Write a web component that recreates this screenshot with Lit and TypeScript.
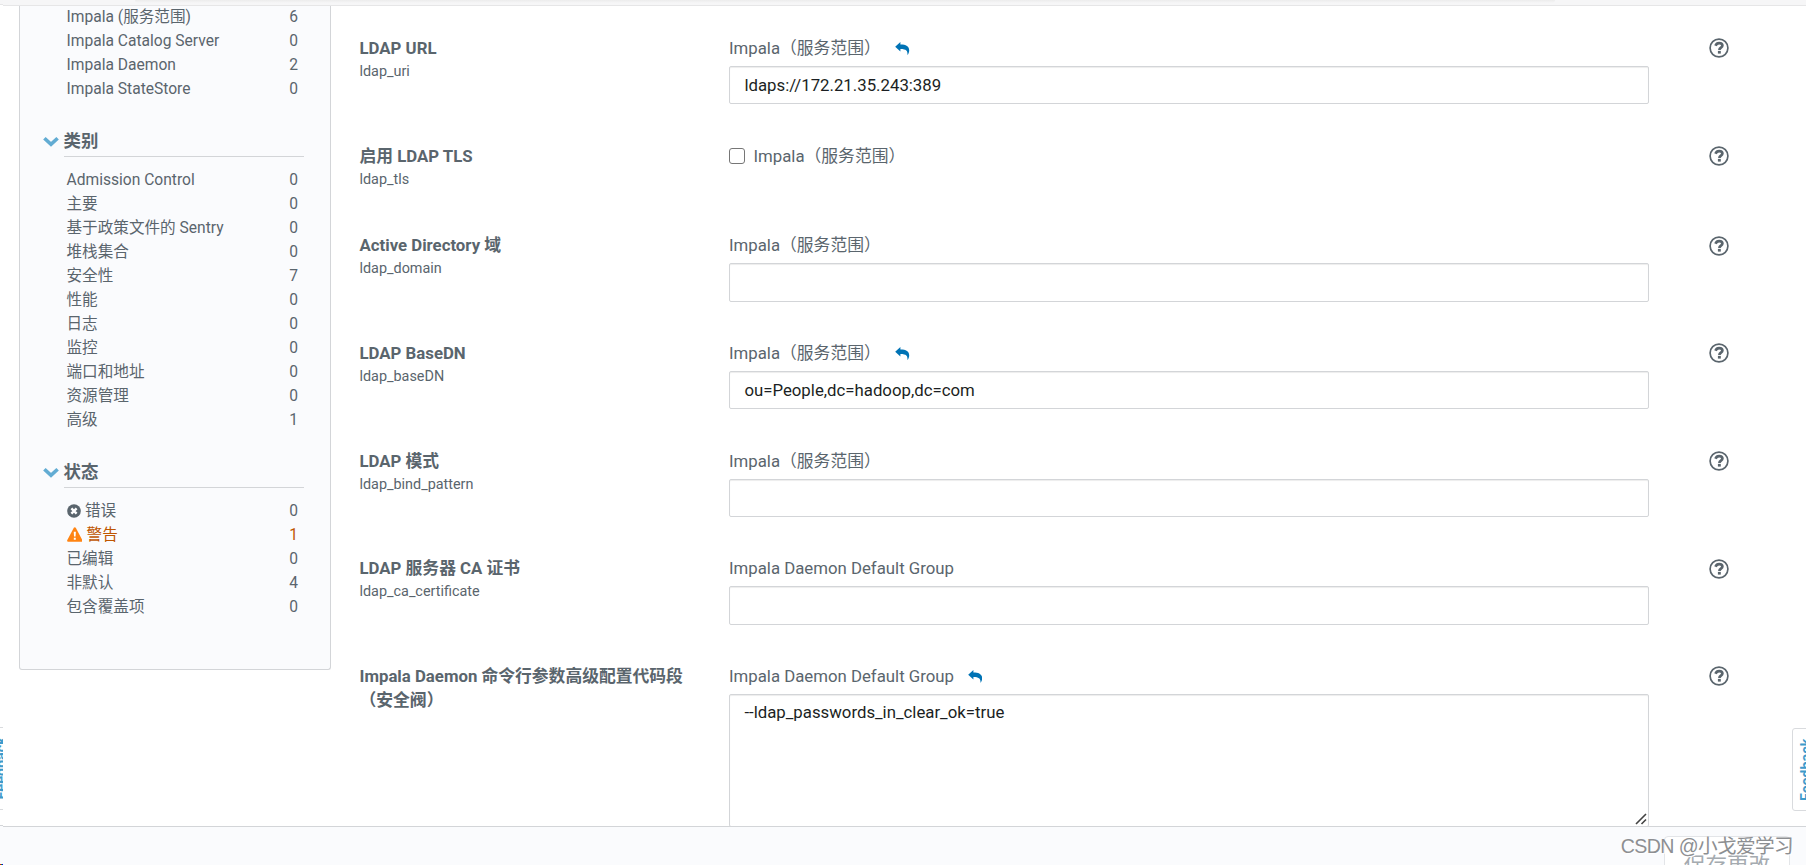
import { LitElement, html, css, svg, nothing } from "lit";
import { customElement } from "lit/decorators.js";

interface Facet { name: string; count: number; icon?: "error" | "warning"; }
interface Setting {
  title: string; key?: string; scope: string; kind: "text" | "check" | "area"; value?: string; edited?: boolean;
}

const SCOPES: Facet[] = [
  { name: "Impala (服务范围)", count: 6 },
  { name: "Impala Catalog Server", count: 0 },
  { name: "Impala Daemon", count: 2 },
  { name: "Impala StateStore", count: 0 },
];
const CATEGORIES: Facet[] = [
  { name: "Admission Control", count: 0 },
  { name: "主要", count: 0 },
  { name: "基于政策文件的 Sentry", count: 0 },
  { name: "堆栈集合", count: 0 },
  { name: "安全性", count: 7 },
  { name: "性能", count: 0 },
  { name: "日志", count: 0 },
  { name: "监控", count: 0 },
  { name: "端口和地址", count: 0 },
  { name: "资源管理", count: 0 },
  { name: "高级", count: 1 },
];
const STATES: Facet[] = [
  { name: "错误", count: 0, icon: "error" },
  { name: "警告", count: 1, icon: "warning" },
  { name: "已编辑", count: 0 },
  { name: "非默认", count: 4 },
  { name: "包含覆盖项", count: 0 },
];
const SERVICE = "Impala（服务范围）";
const GROUP = "Impala Daemon Default Group";
const SETTINGS: Setting[] = [
  { title: "LDAP URL", key: "ldap_uri", scope: SERVICE, kind: "text", value: "ldaps://172.21.35.243:389", edited: true },
  { title: "启用 LDAP TLS", key: "ldap_tls", scope: SERVICE, kind: "check" },
  { title: "Active Directory 域", key: "ldap_domain", scope: SERVICE, kind: "text" },
  { title: "LDAP BaseDN", key: "ldap_baseDN", scope: SERVICE, kind: "text", value: "ou=People,dc=hadoop,dc=com", edited: true },
  { title: "LDAP 模式", key: "ldap_bind_pattern", scope: SERVICE, kind: "text" },
  { title: "LDAP 服务器 CA 证书", key: "ldap_ca_certificate", scope: GROUP, kind: "text" },
  { title: "Impala Daemon 命令行参数高级配置代码段（安全阀）", scope: GROUP, kind: "area", value: "--ldap_passwords_in_clear_ok=true", edited: true },
];

const chevron = svg`<path d="M1.4 4.2 L8 10.4 L14.6 4.2" fill="none" stroke="#62acd3" stroke-width="3.6"/>`;

@customElement("facet-list")
class FacetList extends LitElement {
  static properties = { heading: {}, items: { attribute: false } };
  declare heading: string;
  declare items: Facet[];
  static styles = css`
    :host { display: block; }
    .head { display: flex; align-items: center; height: 31px; margin-bottom: 11.6px; }
    .head svg { width: 16px; height: 14px; margin: 0 5px 0 -1px; flex: none; }
    .title { flex: 1; height: 30px; line-height: 30px; border-bottom: 1px solid #d3d5d8; font-size: 17.4px; font-weight: 700; text-indent: -0.5px; }
    .row { display: flex; align-items: center; height: 24px; line-height: 24px; padding: 0 6px 0 22.5px; }
    .name { flex: 1; }
    .row svg { flex: none; margin-right: 4.5px; }
    .err { width: 14px; height: 14px; }
    .warn { width: 15.6px; height: 15px; margin-top: -2px; }
    .warning { color: #bf5600; }
  `;
  icon(kind?: string) {
    if (kind === "error") return html`<svg class="err" viewBox="0 0 14 14"><circle cx="7" cy="7" r="6.8" fill="#5a656d"/><path d="M4.4 4.4 L9.6 9.6 M9.6 4.4 L4.4 9.6" stroke="#fff" stroke-width="2.4"/></svg>`;
    if (kind === "warning") return html`<svg class="warn" viewBox="0 0 16 15"><path d="M8 0 Q8.6 0 9 .7 L15.8 13.3 Q16.1 14.8 14.9 15 H1.1 Q-.1 14.8 .2 13.3 L7 .7 Q7.4 0 8 0Z" fill="#ff8412"/><path d="M6.9 4.6 H9.1 L8.8 9.6 H7.2Z M7 10.8 H9 V12.9 H7Z" fill="#fff"/></svg>`;
    return nothing;
  }
  render() {
    return html`
      ${this.heading ? html`<div class="head"><svg viewBox="0 0 16 14">${chevron}</svg><div class="title">${this.heading}</div></div>` : nothing}
      ${this.items.map((f) => html`<div class="row ${f.icon ?? ""}">${this.icon(f.icon)}<span class="name">${f.name}</span><span>${f.count}</span></div>`)}
    `;
  }
}

@customElement("setting-row")
class SettingRow extends LitElement {
  static properties = { item: { attribute: false } };
  declare item: Setting;
  static styles = css`
    :host { display: block; height: 107.7px; }
    .row { display: grid; grid-template-columns: 369.5px 920px 1fr; }
    .title { font-weight: 700; line-height: 24px; width: 335px; }
    .key { font-size: 14.4px; line-height: 23.6px; }
    .scope { display: flex; align-items: center; height: 24px; line-height: 24px; margin-bottom: 6px; }
    .undo { width: 14.4px; height: 13px; margin: 1px 0 0 14px; }
    .wide .undo { margin-left: 14.5px; }
    .box { width: 14px; height: 14px; border: 1px solid #767676; border-radius: 3px; margin-right: 8.5px; background: #fff; }
    .field { box-sizing: border-box; height: 38.4px; border: 1px solid #d3d5d8; border-radius: 2px; background: #fff; box-shadow: inset 0 1px 1px rgba(0,0,0,.075); color: #1b1f23; padding: 0 14.4px; line-height: 36px; }
    .area { height: 133px; padding-top: 5.3px; line-height: 24px; display: flex; justify-content: space-between; }
    .grip { align-self: flex-end; width: 12px; height: 12px; margin: 0 -13px 1px 0; }
    .help { width: 20px; height: 20px; margin: 2.4px 0 0 60px; }
  `;
  render() {
    const s = this.item;
    const undo = s.edited ? html`<svg class="undo" viewBox="0 0 14 13"><path d="M0 4.7 L5.2 0 V2.6 C11 2.6 14 4.6 14 8.4 C14 10.3 13.3 11.8 12.2 13 C12.7 9 11.2 7 5.2 7 V9.4Z" fill="#0073b5"/></svg>` : nothing;
    return html`<div class="row">
      <div><div class="title">${s.title}</div>${s.key ? html`<div class="key">${s.key}</div>` : nothing}</div>
      <div>
        <div class="scope ${s.scope === SERVICE ? "wide" : ""}">${s.kind === "check" ? html`<span class="box"></span>` : nothing}<span>${s.scope}</span>${undo}</div>
        ${s.kind === "text" ? html`<div class="field">${s.value}</div>` : nothing}
        ${s.kind === "area" ? html`<div class="field area"><span>${s.value}</span><svg class="grip" viewBox="0 0 12 12"><path d="M1 11 L11 1 M6.5 11 L11 6.5" stroke="#444" stroke-width="1.6"/></svg></div>` : nothing}
      </div>
      <svg class="help" viewBox="0 0 20 20"><circle cx="10" cy="10" r="8.9" fill="none" stroke="#5a656d" stroke-width="1.7"/><path d="M6.5 7.7 C7.2 5.9 8.4 5.1 10.1 5.1 C12.1 5.1 13.4 6.2 13.4 7.6 C13.4 9.8 10.4 9.6 10.4 12" fill="none" stroke="#5a656d" stroke-width="2.7"/><rect x="8.9" y="12.9" width="2.9" height="2.7" fill="#5a656d"/></svg>
    </div>`;
  }
}

@customElement("app-root")
class AppRoot extends LitElement {
  static styles = css`
    :host { display: flex; flex-direction: column; position: relative; width: 1806px; height: 865px; overflow: hidden; background: #fff; color: #5a656d; font-family: Roboto, "Noto Sans CJK SC", sans-serif; font-size: 16.8px; text-spacing-trim: space-all; }
    .top { flex: none; box-sizing: border-box; height: 6px; background: #f6f6f7; border-bottom: 1px solid #e6e6e7; display: flex; }
    .shade { margin-left: 135px; width: 1420px; height: 3px; background: linear-gradient(#ececec, #f6f6f7); border-radius: 0 0 6px 6px; }
    .main { flex: none; height: 820px; overflow: hidden; display: flex; align-items: flex-start; }
    .side { flex: none; box-sizing: border-box; width: 312px; height: 664px; margin-left: 19px; border: 1px solid #d3d5d8; border-top: 0; border-radius: 0 0 3px 3px; background: #fafbfd; padding: 0 26px 0 24px; font-size: 15.6px; overflow: hidden; }
    .scopes { margin-top: -1px; }
    .cats { margin-top: 24.6px; }
    .states { margin-top: 24.4px; }
    .settings { flex: 1; padding: 29.85px 0 0 28.5px; }
    .short { height: 89.7px; }
    .foot { flex: 1; border-top: 1px solid #d3d5d8; background: #fafbfd; display: flex; justify-content: flex-end; align-items: flex-start; overflow: hidden; }
    .save { box-sizing: border-box; width: 126px; height: 58px; margin: 9px 16px 0 0; border: 1px solid #e3e5e8; border-radius: 4px; background: #fff; color: #a5abb0; font-size: 21.6px; line-height: 58px; text-align: center; }
    .mark { position: absolute; right: 13px; top: 830px; font-size: 19.6px; line-height: 32px; color: #8d8f92; white-space: nowrap; text-shadow: 1px 1px 0 #fff; font-family: "Liberation Sans", "Noto Sans CJK SC", sans-serif; letter-spacing: -0.6px; }
    .tab { position: absolute; box-sizing: border-box; top: 728px; height: 83px; width: 30px; left: 1792px; border: 1px solid #d9dbde; border-radius: 3px; background: #fff; color: #3e9acb; font-size: 14.4px; font-weight: 700; line-height: 28px; text-align: center; writing-mode: vertical-rl; }
    .tab span { display: block; transform: rotate(180deg); }
    .edge { position: absolute; left: 0; top: 0; width: 3px; height: 865px; overflow: hidden; display: flex; flex-direction: column; }
    .strip { flex: none; box-sizing: border-box; height: 723px; margin-top: 4px; border-top: 1px solid #e6e6e7; background: #fff; }
    .peek { flex: none; box-sizing: border-box; height: 83px; width: 3px; border: solid #d9dbde; border-width: 1px 0; background: #fff; color: #3e9acb; font-size: 14.4px; font-weight: 700; line-height: 16px; text-align: center; writing-mode: vertical-rl; display: flex; justify-content: center; }
    .peek span { flex: none; width: 16px; transform: rotate(180deg); margin-right: -7px; }
    .gap { flex: none; height: 15px; background: #fff; }
    .base { flex: 1; border-top: 1px solid #d3d5d8; background: #fafbfd; display: flex; align-items: flex-end; }
    .dots { width: 3px; height: 1px; background: linear-gradient(90deg, #e00 0 1px, #092 1px 2px, #00e 2px 3px); }
  `;
  render() {
    return html`
      <div class="top"><div class="shade"></div></div>
      <div class="main">
        <div class="side">
          <facet-list class="scopes" .items=${SCOPES}></facet-list>
          <facet-list class="cats" .heading=${"类别"} .items=${CATEGORIES}></facet-list>
          <facet-list class="states" .heading=${"状态"} .items=${STATES}></facet-list>
        </div>
        <div class="settings">
          ${SETTINGS.map((s) => html`<setting-row class=${s.kind === "check" ? "short" : ""} .item=${s}></setting-row>`)}
        </div>
      </div>
      <div class="foot"><div class="save">保存更改</div></div>
      <div class="edge">
        <div class="strip"></div>
        <div class="peek"><span>Feedback</span></div>
        <div class="gap"></div>
        <div class="base"><div class="dots"></div></div>
      </div>
      <div class="tab"><span>Feedback</span></div>
      <div class="mark">CSDN @小戈爱学习</div>
    `;
  }
}
